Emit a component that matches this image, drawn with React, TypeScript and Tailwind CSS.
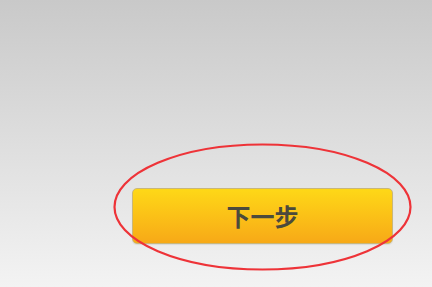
import React from 'react';

const NextStepHighlight = () => (
    <svg className="pointer-events-none absolute left-[-20px] top-[-46px]" width="301" height="130" viewBox="0 0 301 130">
        <ellipse cx="150.5" cy="65" rx="148" ry="62.5" fill="none" stroke="#ee3338" strokeWidth="2.2" />
    </svg>
);

export default function App() {
    return (
        <div className="flex h-[287px] w-[432px] flex-col bg-gradient-to-b from-[#c9c9c9] via-[#dedede] to-[#f3f3f3] pl-[132px] pt-[188px] font-['Noto_Sans_CJK_SC',sans-serif]">
            <div className="relative w-[261px]">
                <button
                    type="button"
                    className="flex h-[56px] w-[261px] items-center justify-center rounded-[5px] border border-[#c9b77a] bg-gradient-to-b from-[#fed817] to-[#f7a917] text-[24px] font-bold leading-none text-[#4b4a3c] shadow-[0_1px_1px_rgba(0,0,0,0.08)]"
                >
                    下一步
                </button>
                <NextStepHighlight />
            </div>
        </div>
    );
}
